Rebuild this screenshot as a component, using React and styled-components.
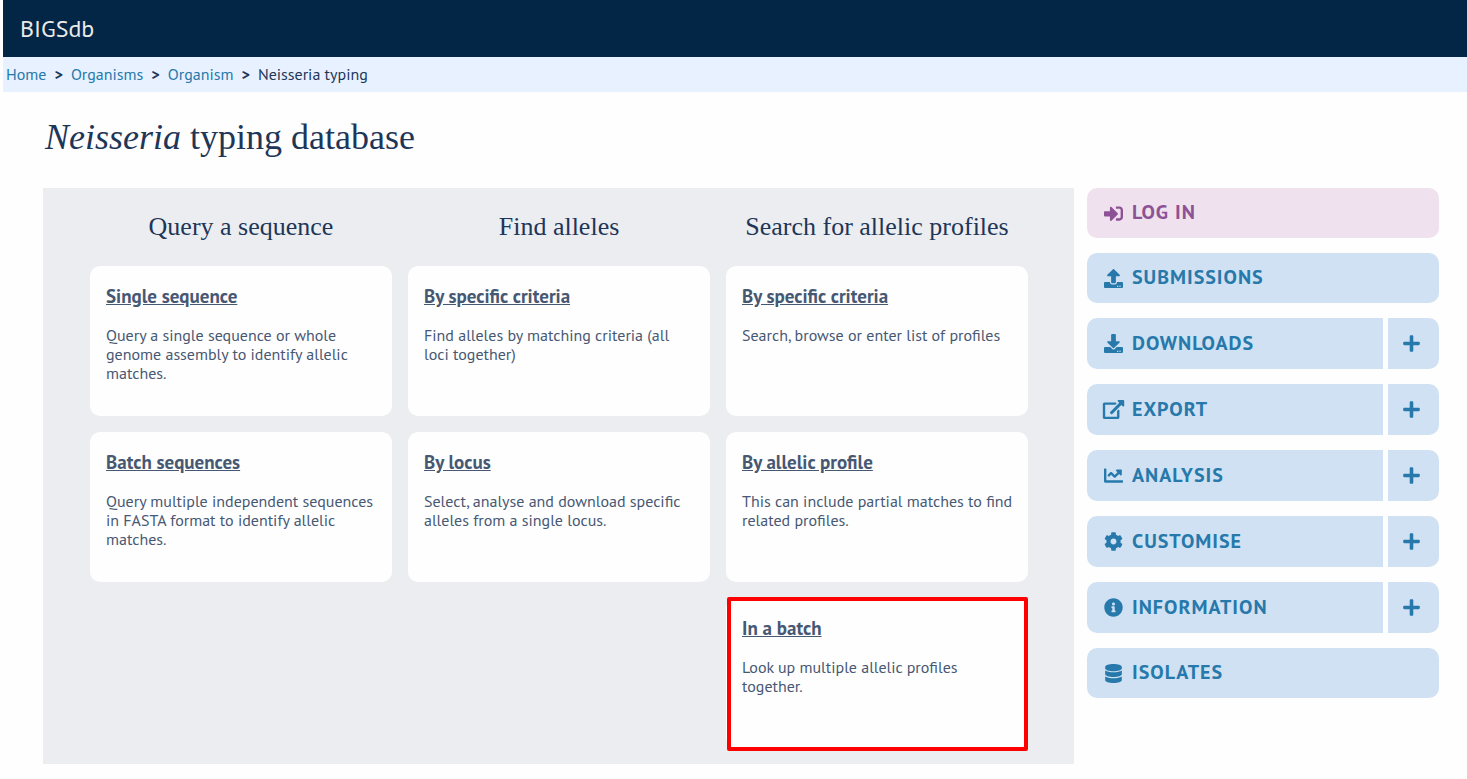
import React from "react";
import styled, { createGlobalStyle } from "styled-components";
import {
  FaSignInAlt,
  FaUpload,
  FaDownload,
  FaChartLine,
  FaCog,
  FaInfoCircle,
  FaDatabase,
  FaPlus,
} from "react-icons/fa";

const GlobalStyle = createGlobalStyle`
  *, *::before, *::after { box-sizing: border-box; }
  body {
    margin: 0 0 0 3px;
    background: #fefefe;
    color: #1e3657;
    font-family: "PT Sans", Lato, "Noto Sans", sans-serif;
    font-size: 16px;
    line-height: 19px;
  }
  h1, h2, h3, p, ul, ol { margin: 0; padding: 0; font-weight: normal; }
  ul, ol { list-style: none; }
`;

const Header = styled.header`
  display: flex;
  align-items: center;
  height: 57px;
  padding: 0 17px;
  background: #032546;
  color: #eceae6;
  font-size: 24px;
  line-height: 28px;
`;

const Breadcrumbs = styled.ol`
  display: flex;
  align-items: center;
  height: 35px;
  padding: 0 3px;
  background: #e7f1ff;
`;

const Crumb = styled.li`
  & + &::before {
    content: ">";
    padding: 0 8px;
    font-weight: bold;
  }
`;

const CrumbLink = styled.a`
  color: #2679aa;
  text-decoration: none;
`;

const Title = styled.h1`
  padding: 24px 42px 30px;
  font-family: "Liberation Serif", serif;
  font-size: 36px;
  line-height: 42px;
`;

const Content = styled.main`
  display: flex;
  align-items: flex-start;
  gap: 13px;
  padding: 0 28px 15px 40px;
`;

const Panel = styled.div`
  flex: 1;
  display: grid;
  grid-template-columns: repeat(3, minmax(0, 1fr));
  gap: 16px;
  padding: 23px 46px 16px 47px;
  background: #ecedf1;
`;

const Column = styled.section`
  display: flex;
  flex-direction: column;
  gap: 16px;
`;

const ColumnTitle = styled.h2`
  padding-bottom: 7px;
  font-family: "Liberation Serif", serif;
  font-size: 26px;
  line-height: 32px;
  text-align: center;
`;

const Card = styled.article`
  position: relative;
  height: 150px;
  padding: 19px 14px 16px 16px;
  border-radius: 10px;
  background: #fefefe;
  color: #475873;

  &::after {
    content: ${(p) => (p.$highlighted ? '""' : "none")};
    position: absolute;
    inset: -1px 0 -3px 1px;
    border: 4px solid #ff0000;
    border-radius: 2px;
    pointer-events: none;
  }
`;

const CardTitle = styled.h3`
  margin-bottom: 19px;
  font-size: 19px;
  line-height: 22px;
`;

const CardLink = styled.a`
  color: inherit;
  font-weight: bold;
  text-decoration: underline;
`;

const Menu = styled.ul`
  flex: 0 0 352px;
  display: flex;
  flex-direction: column;
  gap: 15px;
`;

const MenuItem = styled.li`
  display: flex;
  gap: 5px;
  height: ${(p) => (p.$expandable ? 51 : 50)}px;
`;

const MenuLink = styled.a`
  flex: 1;
  display: flex;
  align-items: center;
  gap: 6px;
  padding: 0 15px 2px;
  border-radius: ${(p) => (p.$expandable ? "10px 0 0 10px" : "10px")};
  background: ${(p) => (p.$login ? "#efe2ee" : "#d0e1f3")};
  color: ${(p) => (p.$login ? "#8d5195" : "#2679aa")};
  font-size: 20px;
  font-weight: bold;
  line-height: 24px;
  letter-spacing: 1px;
  text-decoration: none;
  text-transform: uppercase;
`;

const MenuIcon = styled.span`
  flex: 0 0 24px;
  display: flex;
  padding-top: 2px;

  svg { width: 23px; height: 19px; }
`;

const ExpandButton = styled.button`
  flex: 0 0 51px;
  display: flex;
  align-items: center;
  justify-content: center;
  padding: 0 4px 0 0;
  border: 0;
  border-radius: 0 10px 10px 0;
  background: #d0e1f3;
  color: #2679aa;

  svg { width: 19px; height: 19px; }
`;

function ExternalIcon(props) {
  return (
    <svg viewBox="0 0 576 512" fill="currentColor" {...props}>
      <path d="M576 24v127.984c0 21.461-25.96 31.98-40.971 16.971l-35.707-35.709-243.523 243.523c-9.373 9.373-24.568 9.373-33.941 0l-22.627-22.627c-9.373-9.373-9.373-24.569 0-33.941L442.756 76.676l-35.703-35.705C391.982 25.9 402.656 0 424.024 0H552c13.255 0 24 10.745 24 24zM407.029 270.794l-16 16A23.999 23.999 0 0 0 384 303.765V448H64V128h264a24.003 24.003 0 0 0 16.97-7.029l16-16C376.089 89.851 365.381 64 344 64H48C21.49 64 0 85.49 0 112v352c0 26.51 21.49 48 48 48h352c26.51 0 48-21.49 48-48V287.764c0-21.382-25.852-32.09-40.971-16.97z" />
    </svg>
  );
}

const crumbs = ["Home", "Organisms", "Organism"];

const columns = [
  {
    title: "Query a sequence",
    cards: [
      { title: "Single sequence", text: "Query a single sequence or whole genome assembly to identify allelic matches." },
      { title: "Batch sequences", text: "Query multiple independent sequences in FASTA format to identify allelic matches." },
    ],
  },
  {
    title: "Find alleles",
    cards: [
      { title: "By specific criteria", text: "Find alleles by matching criteria (all loci together)" },
      { title: "By locus", text: "Select, analyse and download specific alleles from a single locus." },
    ],
  },
  {
    title: "Search for allelic profiles",
    cards: [
      { title: "By specific criteria", text: "Search, browse or enter list of profiles" },
      { title: "By allelic profile", text: "This can include partial matches to find related profiles." },
      { title: "In a batch", text: "Look up multiple allelic profiles together.", highlighted: true },
    ],
  },
];

const menu = [
  { label: "Log in", Icon: FaSignInAlt, login: true },
  { label: "Submissions", Icon: FaUpload },
  { label: "Downloads", Icon: FaDownload, expandable: true },
  { label: "Export", Icon: ExternalIcon, expandable: true },
  { label: "Analysis", Icon: FaChartLine, expandable: true },
  { label: "Customise", Icon: FaCog, expandable: true },
  { label: "Information", Icon: FaInfoCircle, expandable: true },
  { label: "Isolates", Icon: FaDatabase },
];

export default function App() {
  return (
    <>
      <GlobalStyle />
      <Header>BIGSdb</Header>
      <nav aria-label="Breadcrumb">
        <Breadcrumbs>
          {crumbs.map((name) => (
            <Crumb key={name}>
              <CrumbLink href="#">{name}</CrumbLink>
            </Crumb>
          ))}
          <Crumb aria-current="page">Neisseria typing</Crumb>
        </Breadcrumbs>
      </nav>
      <Title>
        <i>Neisseria</i> typing database
      </Title>
      <Content>
        <Panel>
          {columns.map((column) => (
            <Column key={column.title}>
              <ColumnTitle>{column.title}</ColumnTitle>
              {column.cards.map((card) => (
                <Card key={card.title} $highlighted={card.highlighted}>
                  <CardTitle>
                    <CardLink href="#">{card.title}</CardLink>
                  </CardTitle>
                  <p>{card.text}</p>
                </Card>
              ))}
            </Column>
          ))}
        </Panel>
        <Menu>
          {menu.map(({ label, Icon, login, expandable }) => (
            <MenuItem key={label} $expandable={expandable}>
              <MenuLink href="#" $login={login} $expandable={expandable}>
                <MenuIcon>
                  <Icon aria-hidden="true" />
                </MenuIcon>
                {label}
              </MenuLink>
              {expandable && (
                <ExpandButton type="button" aria-label={`Expand ${label}`}>
                  <FaPlus aria-hidden="true" />
                </ExpandButton>
              )}
            </MenuItem>
          ))}
        </Menu>
      </Content>
    </>
  );
}
